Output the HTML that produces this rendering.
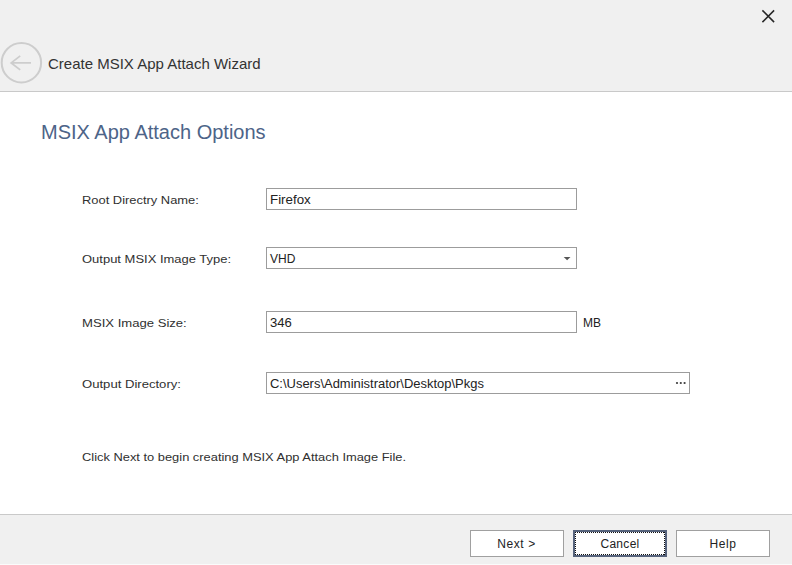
<!DOCTYPE html>
<html>
<head>
<meta charset="utf-8">
<style>
html,body{margin:0;padding:0;}
body{width:792px;height:565px;position:relative;overflow:hidden;background:#fff;font-family:"Liberation Sans",sans-serif;color:#222;}
.abs{position:absolute;white-space:nowrap;}
#header{position:absolute;left:0;top:0;width:792px;height:91px;background:#f0f0f0;}
#hline{position:absolute;left:0;top:91px;width:792px;height:1px;background:#c9c9c9;}
#content{position:absolute;left:0;top:92px;width:792px;height:422px;background:#fff;}
#fline{position:absolute;left:0;top:514px;width:792px;height:1px;background:#c9c9c9;}
#footer{position:absolute;left:0;top:515px;width:792px;height:49px;background:#f0f0f0;}
#fbot{position:absolute;left:0;top:564px;width:792px;height:1px;background:#fbfbfb;}
.title{font-size:15px;color:#333;line-height:18px;}
.sub{font-size:20px;color:#4d6488;line-height:24px;}
.lbl{font-size:11px;color:#303030;line-height:13px;}
.inp{font-size:12px;color:#222;line-height:14px;}
.box{position:absolute;box-sizing:border-box;border:1px solid #9c9c9c;background:#fff;}
.btn{position:absolute;box-sizing:border-box;border:1px solid #a0a0a0;background:#fff;width:94px;height:27px;font-size:12px;color:#222;text-align:center;line-height:27px;}
</style>
</head>
<body>
<div id="header"></div>
<div id="hline"></div>
<div id="content"></div>
<div id="fline"></div>
<div id="footer"></div>
<div id="fbot"></div>

<!-- close X -->
<svg class="abs" style="left:760px;top:8px" width="16" height="16" viewBox="0 0 16 16">
  <path d="M2.4 2.4 L14.1 14.1 M14.1 2.4 L2.4 14.1" stroke="#262626" stroke-width="1.5" fill="none"/>
</svg>

<!-- back circle -->
<svg class="abs" style="left:0px;top:42px" width="44" height="44" viewBox="0 0 44 44">
  <circle cx="21.4" cy="20.7" r="19.7" stroke="#cdcdcd" stroke-width="2" fill="none"/>
  <path d="M11 20.9 H31 M20.2 13.9 L11.2 20.9 L20.2 27.9" stroke="#cdcdcd" stroke-width="1.8" fill="none"/>
</svg>

<div class="abs title" style="left:48px;top:55px">Create MSIX App Attach Wizard</div>
<div class="abs sub" style="left:41px;top:120px">MSIX App Attach Options</div>

<div class="abs lbl" style="left:82px;top:194px;transform:scaleX(1.173);transform-origin:0 0">Root Directry Name:</div>
<div class="box" style="left:266px;top:188px;width:311px;height:22px"></div>
<div class="abs inp" style="left:270px;top:193px;transform:scaleX(1.11);transform-origin:0 0">Firefox</div>

<div class="abs lbl" style="left:82px;top:253px;transform:scaleX(1.18);transform-origin:0 0">Output MSIX Image Type:</div>
<div class="box" style="left:266px;top:247px;width:311px;height:22px"></div>
<div class="abs inp" style="left:270px;top:252px">VHD</div>
<svg class="abs" style="left:563px;top:256px" width="9" height="6" viewBox="0 0 9 6"><path d="M0.7 0.9 H7.5 L4.1 4.3 Z" fill="#555"/></svg>

<div class="abs lbl" style="left:82px;top:317px;transform:scaleX(1.19);transform-origin:0 0">MSIX Image Size:</div>
<div class="box" style="left:266px;top:311px;width:311px;height:22px"></div>
<div class="abs inp" style="left:270px;top:316px;transform:scaleX(1.09);transform-origin:0 0">346</div>
<div class="abs inp" style="left:583px;top:316px">MB</div>

<div class="abs lbl" style="left:82px;top:378px;transform:scaleX(1.19);transform-origin:0 0">Output Directory:</div>
<div class="box" style="left:266px;top:372px;width:424px;height:22px"></div>
<div class="abs inp" style="left:270px;top:377px;transform:scaleX(1.08);transform-origin:0 0">C:\Users\Administrator\Desktop\Pkgs</div>
<svg class="abs" style="left:675px;top:381px" width="12" height="4" viewBox="0 0 12 4"><circle cx="2" cy="2" r="1.1" fill="#3a3a3a"/><circle cx="5.8" cy="2" r="1.1" fill="#3a3a3a"/><circle cx="9.6" cy="2" r="1.1" fill="#3a3a3a"/></svg>

<div class="abs lbl" style="left:82px;top:451px;transform:scaleX(1.17);transform-origin:0 0">Click Next to begin creating MSIX App Attach Image File.</div>

<div class="btn" style="left:470px;top:530px;letter-spacing:0.6px;text-indent:-1px">Next &gt;</div>
<div class="btn" style="left:573px;top:530px;border:2px solid #56637c;line-height:25px;letter-spacing:0.3px;">Cancel</div>
<svg class="abs" style="left:575px;top:532px" width="90" height="23" viewBox="0 0 90 23" shape-rendering="crispEdges"><path d="M0 0.5 H90 M0 22.5 H90 M0.5 0 V23 M89.5 0 V23" stroke="#111" stroke-width="1" stroke-dasharray="1 1" fill="none"/></svg>
<div class="btn" style="left:676px;top:530px;letter-spacing:0.6px;text-indent:-0px">Help</div>
</body>
</html>
